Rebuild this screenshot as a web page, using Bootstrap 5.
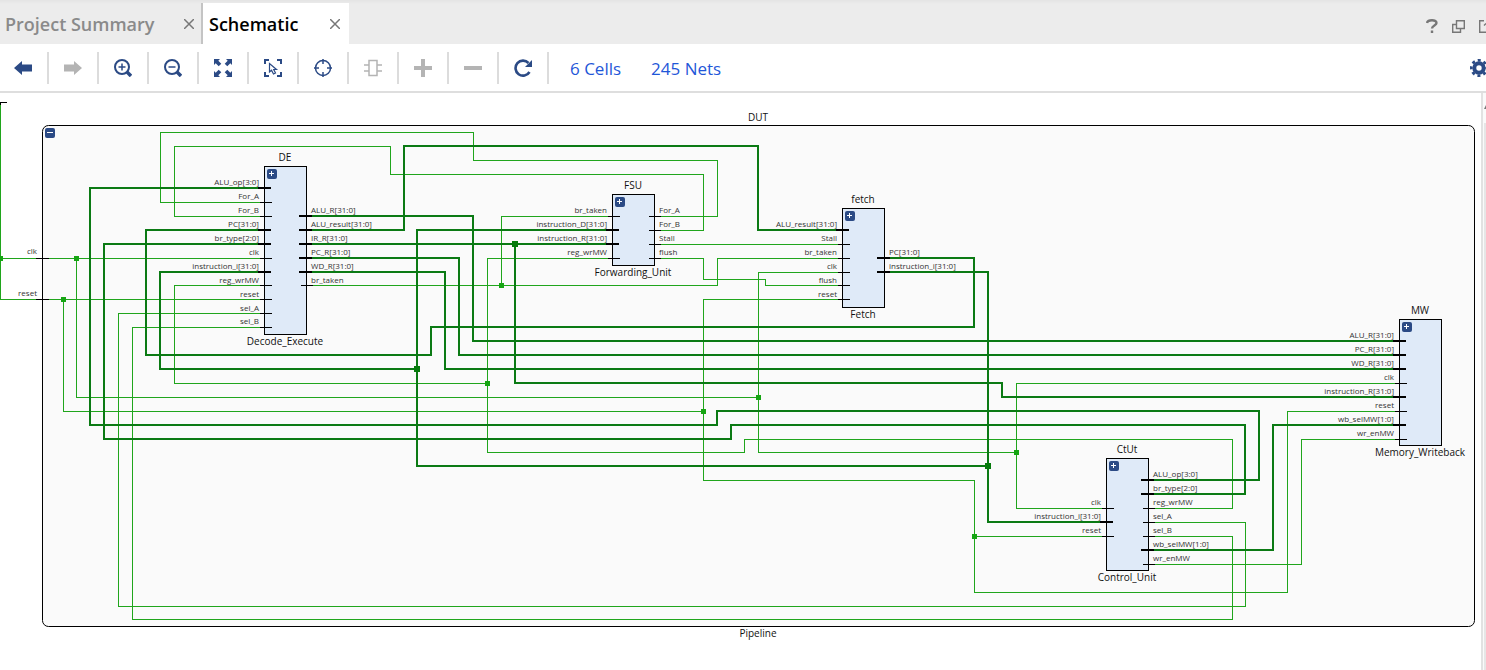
<!DOCTYPE html>
<html lang="en">
<head>
<meta charset="utf-8">
<meta name="viewport" content="width=device-width, initial-scale=1">
<title>Schematic</title>
<link href="https://cdn.jsdelivr.net/npm/bootstrap@5.3.0/dist/css/bootstrap.min.css" rel="stylesheet">
<style>
  :root { --ink: #2b4a85; --off: #b4b4b4; }
  body { font-family: "Open Sans", "Noto Sans", sans-serif; background: #fff; }
  .tabstrip { height: 44px; background: linear-gradient(#e4e4e4, #ececec 4px); }
  .doc-tab { margin-top: 3px; padding-top: 1px; font-size: 18px; line-height: 24px; font-weight: 600; color: #8a8a8a; }
  .doc-tab a { color: inherit; }
  .doc-tab.first { width: 203px; padding-left: 5px; padding-right: 6px; border-right: 2px solid #c4c4c4; }
  .doc-tab.current { width: 146px; padding-left: 6px; padding-right: 8px; background: #fff; color: #000; }
  .plain { border: 0; padding: 0; background: none; color: inherit; display: flex; align-items: center; justify-content: center; }
  .plain:disabled { color: var(--off); }
  .closer { width: 12px; height: 24px; color: #777; }
  .window-tools { color: #777; gap: 14px; }
  .toolbar { height: 49px; border-bottom: 2px solid #dedede; color: var(--ink); }
  .tool { width: 50px; }
  .tool .plain { width: 46px; height: 34px; }
  .split { width: 2px; height: 32px; margin-left: 1px; background: #dcdcdc; }
  .counts { font-size: 17px; gap: 30px; padding: 3px 0 0 20px; }
  .counts a { color: #1f57d8; }
  .stage { min-height: 0; }
  .sheet { min-width: 0; overflow: hidden; position: relative; }
  .sheet svg.drawing { width: 100%; height: 100%; position: absolute; inset: 0; }
  .gutter { width: 5px; border-left: 2px solid #e2e2e2; background: #fafafa; padding-top: 12px; }
  .thumb { background: #e6e6e6; width: 2px; margin: 14px 0 0 1px; }
  .knob { position: absolute; width: 10px; height: 10px; border-radius: 2px; background: var(--ink); color: #fff; }
  .frame { fill: #fafafa; stroke: #000; }
  .cell { fill: #dfeaf8; stroke: #000; }
  .wire { fill: none; stroke: #20a51c; }
  .bus { fill: none; stroke: #0b7a14; stroke-width: 2; }
  .dot { fill: #16a513; }
  .busdot { fill: #067a0c; }
  .pin { stroke: #000; }
  .buspin { stroke: #000; stroke-width: 2; }
  .port { font-size: 8px; fill: #333; }
  .title { font-size: 10px; fill: #111; text-anchor: middle; }
  .end { text-anchor: end; }
  .crisp { shape-rendering: crispEdges; }
</style>
</head>
<body class="vh-100 d-flex flex-column overflow-hidden">
<header class="tabstrip d-flex flex-shrink-0">
  <div class="doc-tab first d-flex align-items-center justify-content-between">
    <a href="#summary" class="text-decoration-none text-nowrap">Project Summary</a>
    <button class="plain closer" aria-label="Close Project Summary"><svg width="10" height="10" viewBox="0 0 10 10" stroke="currentColor" stroke-width="1.5"><path d="M0 0 10 10M10 0 0 10"/></svg></button>
  </div>
  <div class="doc-tab current d-flex align-items-center justify-content-between">
    <a href="#schematic" class="text-decoration-none">Schematic</a>
    <button class="plain closer" aria-label="Close Schematic"><svg width="10" height="10" viewBox="0 0 10 10" stroke="currentColor" stroke-width="1.5"><path d="M0 0 10 10M10 0 0 10"/></svg></button>
  </div>
  <div class="window-tools d-flex ms-auto align-items-center pt-2">
    <button class="plain" aria-label="Help"><svg width="12" height="14" viewBox="0 0 12 14" fill="none" stroke="currentColor" stroke-width="2.4"><path d="M1 4C1.500 .5 10.500 .2 10.500 4C10.500 6.500 6 6.500 6 9.500M6 11.500V14"/></svg></button>
    <button class="plain" aria-label="Float"><svg width="13" height="13" viewBox="0 0 13 13" fill="none" stroke="currentColor" stroke-width="1.400"><path d="M4.500 8.500V.7H12.300V8.500ZM4.500 4.500H.7V12.300H8.500V8.500"/></svg></button>
    <button class="plain" aria-label="Maximize"><svg width="7" height="13" viewBox="0 0 7 13" fill="none" stroke="currentColor" stroke-width="1.400"><path d="M5 .7H.7V12.300H7M5 5.500 7 3.500"/></svg></button>
  </div>
</header>

<nav class="toolbar d-flex align-items-center flex-shrink-0" aria-label="Schematic tools">
  <div class="tool d-flex align-items-center"><button class="plain" aria-label="Back"><svg width="18" height="14" viewBox="0 0 18 14" fill="currentColor"><path d="M0 7 8 0V3.500H18V10.500H8V14Z"/></svg></button><span class="split"></span></div>
  <div class="tool d-flex align-items-center"><button class="plain" disabled aria-label="Forward"><svg width="18" height="14" viewBox="0 0 18 14" fill="currentColor"><path d="M18 7 10 0V3.500H0V10.500H10V14Z"/></svg></button><span class="split"></span></div>
  <div class="tool d-flex align-items-center"><button class="plain" aria-label="Zoom in"><svg width="18" height="18" viewBox="0 0 18 18" fill="none" stroke="currentColor"><circle cx="8" cy="8" r="7" stroke-width="2"/><path d="M8 4.500V11.500M4.500 8H11.500" stroke-width="1.500"/><path d="M12.800 12.800 17 17" stroke-width="3.500"/></svg></button><span class="split"></span></div>
  <div class="tool d-flex align-items-center"><button class="plain" aria-label="Zoom out"><svg width="18" height="18" viewBox="0 0 18 18" fill="none" stroke="currentColor"><circle cx="8" cy="8" r="7" stroke-width="2"/><path d="M4.500 8H11.500" stroke-width="1.500"/><path d="M12.800 12.800 17 17" stroke-width="3.500"/></svg></button><span class="split"></span></div>
  <div class="tool d-flex align-items-center"><button class="plain" aria-label="Zoom fit"><svg width="18" height="18" viewBox="0 0 18 18" fill="currentColor"><path d="M0 0H6L4.300 1.700 7.300 4.700 4.700 7.300 1.700 4.300 0 6ZM18 0V6L16.300 4.300 13.300 7.300 10.700 4.700 13.700 1.700 12 0ZM0 18V12L1.700 13.700 4.700 10.700 7.300 13.300 4.300 16.300 6 18ZM18 18H12L13.700 16.300 10.700 13.300 13.300 10.700 16.300 13.700 18 12Z"/></svg></button><span class="split"></span></div>
  <div class="tool d-flex align-items-center"><button class="plain" aria-label="Select area"><svg width="18" height="18" viewBox="0 0 18 18" fill="none" stroke="currentColor"><path d="M1 5V1H5M13 1H17V5M17 13V17H13M5 17H1V13" stroke-width="2"/><path d="M5.500 4.500V13L7.500 11.300 9.500 15 11.500 14 9.700 10.500H12.500Z" stroke-width="1.200"/></svg></button><span class="split"></span></div>
  <div class="tool d-flex align-items-center"><button class="plain" aria-label="Auto-fit selection"><svg width="18" height="18" viewBox="0 0 18 18" fill="none" stroke="currentColor" stroke-width="1.500"><circle cx="9" cy="9" r="7.500"/><path d="M9 0V5M9 13V18M0 9H5M13 9H18"/></svg></button><span class="split"></span></div>
  <div class="tool d-flex align-items-center"><button class="plain" disabled aria-label="Expand cell"><svg width="20" height="18" viewBox="0 0 20 18" fill="none" stroke="currentColor" stroke-width="1.500"><path d="M6 1.500H14V16.500H6ZM1 6H6M1 12H6M14 6H19M14 12H19"/></svg></button><span class="split"></span></div>
  <div class="tool d-flex align-items-center"><button class="plain" disabled aria-label="Add"><svg width="18" height="18" viewBox="0 0 18 18" fill="currentColor"><path d="M7 0H11V7H18V11H11V18H7V11H0V7H7Z"/></svg></button><span class="split"></span></div>
  <div class="tool d-flex align-items-center"><button class="plain" disabled aria-label="Remove"><svg width="18" height="4" viewBox="0 0 18 4" fill="currentColor"><path d="M0 0H18V4H0Z"/></svg></button><span class="split"></span></div>
  <div class="tool d-flex align-items-center"><button class="plain" aria-label="Regenerate"><svg width="18" height="18" viewBox="0 0 18 18" fill="none" stroke="currentColor"><path d="M15.500 13A7.500 7.500 0 1 1 14.500 4" stroke-width="2.600"/><path d="M18 1V8H11Z" fill="currentColor" stroke="none"/></svg></button><span class="split"></span></div>
  <div class="counts d-flex text-nowrap">
    <a href="#cells" class="text-decoration-none">6 Cells</a>
    <a href="#nets" class="text-decoration-none">245 Nets</a>
  </div>
  <button class="plain ms-auto" aria-label="Settings"><svg width="16" height="18" viewBox="0 0 16 18"><g fill="none" stroke="#2b4a85"><circle cx="9" cy="9" r="4.700" stroke-width="4"/><circle cx="9" cy="9" r="7.700" stroke-width="2.600" stroke-dasharray="3.024 3.024" stroke-dashoffset="1.512"/></g></svg></button>
</nav>

<main class="stage d-flex flex-grow-1">
  <div class="sheet flex-grow-1" id="sheet">
    <svg class="drawing" id="drawing" role="img" aria-label="Pipeline schematic"></svg>
  </div>
  <div class="gutter flex-shrink-0 d-flex flex-column">
    <svg class="flex-shrink-0" width="3" height="4" viewBox="0 0 3 4" fill="#777"><path d="M1 4 3 0V4Z"/></svg>
    <div class="thumb flex-grow-1"></div>
  </div>
</main>

<script src="https://cdn.jsdelivr.net/npm/bootstrap@5.3.0/dist/js/bootstrap.bundle.min.js"></script>
<script>
  // Sheet coordinates start at row 93 of the schematic's own grid.
  const ORIGIN = 93;
  const frame = { x: 42, y: 125, w: 1432, h: 501, name: 'DUT', type: 'Pipeline' };

  // Ports are [row, label]; a label with a [range] is a bus.
  const cells = [
    { x: 264, y: 166, h: 168, name: 'DE', type: 'Decode_Execute',
      left: [[188,'ALU_op[3:0]'],[202,'For_A'],[216,'For_B'],[230,'PC[31:0]'],[244,'br_type[2:0]'],[258,'clk'],[272,'instruction_i[31:0]'],[285,'reg_wrMW'],[299,'reset'],[313,'sel_A'],[327,'sel_B']],
      right: [[216,'ALU_R[31:0]'],[230,'ALU_result[31:0]'],[244,'IR_R[31:0]'],[258,'PC_R[31:0]'],[272,'WD_R[31:0]'],[285,'br_taken']] },
    { x: 612, y: 194, h: 71, name: 'FSU', type: 'Forwarding_Unit',
      left: [[216,'br_taken'],[230,'instruction_D[31:0]'],[244,'instruction_R[31:0]'],[258,'reg_wrMW']],
      right: [[216,'For_A'],[230,'For_B'],[244,'Stall'],[258,'flush']] },
    { x: 842, y: 208, h: 99, name: 'fetch', type: 'Fetch',
      left: [[230,'ALU_result[31:0]'],[244,'Stall'],[258,'br_taken'],[272,'clk'],[285,'flush'],[299,'reset']],
      right: [[258,'PC[31:0]'],[272,'instruction_i[31:0]']] },
    { x: 1106, y: 458, h: 112, name: 'CtUt', type: 'Control_Unit',
      left: [[508,'clk'],[522,'instruction_i[31:0]'],[536,'reset']],
      right: [[480,'ALU_op[3:0]'],[494,'br_type[2:0]'],[508,'reg_wrMW'],[522,'sel_A'],[536,'sel_B'],[550,'wb_selMW[1:0]'],[564,'wr_enMW']] },
    { x: 1399, y: 319, h: 126, name: 'MW', type: 'Memory_Writeback',
      left: [[341,'ALU_R[31:0]'],[355,'PC_R[31:0]'],[369,'WD_R[31:0]'],[383,'clk'],[397,'instruction_R[31:0]'],[411,'reset'],[425,'wb_selMW[1:0]'],[439,'wr_enMW']],
      right: [] }
  ];

  const wires = [
    'M264 202H160V132H473V160H717V216H654',
    'M264 216H174V146H390V174H703V230H654',
    'M654 244H842',
    'M654 258H703V279H765V285H842',
    'M306 285H717V258H842M501 285V216H612',
    'M0 258H264M76 258V397H758M842 272H758V452H1016M1399 383H1016V508H1106',
    'M0 103V299H264M63 299V411H703M842 299H703V480H974V592H1287V411H1399M974 536H1106',
    'M264 313H118V606H1245V522H1148',
    'M264 327H132V619H1232V536H1148',
    'M264 285H174V383H487M612 258H487V452H744V439H1232V508H1148',
    'M1148 564H1301V439H1399'
  ];
  const buses = [
    'M264 188H90V425H717V411H1259V480H1148',
    'M264 244H104V439H731V425H1245V494H1148',
    'M264 230H146V355H431V327H974V258H884',
    'M264 272H160V369H417M612 230H417V466H988M884 272H988V522H1106',
    'M306 216H473V341H1399',
    'M306 230H404V146H758V230H842',
    'M306 244H612M515 244V383H1002V397H1399',
    'M306 258H459V355H1399',
    'M306 272H445V369H1399',
    'M1148 550H1273V425H1399'
  ];
  const dots = [[0,258],[76,258],[63,299],[501,285],[487,383],[758,397],[703,411],[1016,452],[974,536]];
  const busDots = [[417,369],[515,244],[988,466]];

  const text = (cls, x, y, s) => `<text class="${cls}" x="${x}" y="${y}">${s}</text>`;
  const baseline = y => y >= 285 && y <= 313 ? y - 2 : y - 3;
  const pin = (x, y, s) => s.includes('[')
    ? `<path class="buspin" d="M${x} ${y}h13"/>`
    : `<path class="pin" transform="translate(.5 .5)" d="M${x + 1} ${y}h12"/>`;

  let crisp = '', labels = '';
  crisp += `<g transform="translate(.5 .5)">${wires.map(d => `<path class="wire" d="${d}"/>`).join('')}</g>`;
  crisp += buses.map(d => `<path class="bus" d="${d}"/>`).join('');
  crisp += dots.map(([x, y]) => `<path class="dot" d="M${x - 2} ${y - 2}h5v5h-5z"/>`).join('');
  crisp += busDots.map(([x, y]) => `<path class="busdot" d="M${x - 3} ${y - 3}h6v6h-6z"/>`).join('');
  crisp += '<path class="pin" fill="none" transform="translate(.5 .5)" d="M0 104V102H6M35 258h13M35 299h13"/>';
  labels += text('port end', 37, 254, 'clk') + text('port end', 37, 296, 'reset');

  for (const c of cells) {
    crisp += `<rect class="cell" x="${c.x + .5}" y="${c.y + .5}" width="42" height="${c.h}"/>`;
    labels += text('title', c.x + 21, c.y - 5, c.name) + text('title', c.x + 21, c.y + c.h + 11, c.type);
    for (const [y, s] of c.left) { crisp += pin(c.x - 6, y, s); labels += text('port end', c.x - 5, baseline(y), s); }
    for (const [y, s] of c.right) { crisp += pin(c.x + 35, y, s); labels += text('port', c.x + 47, baseline(y), s); }
  }
  const mid = frame.x + frame.w / 2;
  labels += text('title', mid, frame.y - 4, frame.name) + text('title', mid, frame.y + frame.h + 11, frame.type);

  document.getElementById('drawing').innerHTML =
    `<g transform="translate(0 ${-ORIGIN})">
       <rect class="frame" x="${frame.x + .5}" y="${frame.y + .5}" width="${frame.w}" height="${frame.h}" rx="6"/>
       <g class="crisp">${crisp}</g>${labels}</g>`;

  const knob = (x, y, label, d) => `<button class="plain knob" style="left:${x}px;top:${y - ORIGIN}px" aria-label="${label}">
    <svg width="10" height="10" viewBox="0 0 10 10" stroke="#fff" shape-rendering="crispEdges"><path d="${d}"/></svg></button>`;
  document.getElementById('sheet').insertAdjacentHTML('beforeend',
    knob(frame.x + 3, frame.y + 3, 'Collapse DUT', 'M2 4.500H8') +
    cells.map(c => knob(c.x + 3, c.y + 3, 'Expand ' + c.name, 'M2 4.500H7M4.500 2V7')).join(''));
</script>
</body>
</html>
